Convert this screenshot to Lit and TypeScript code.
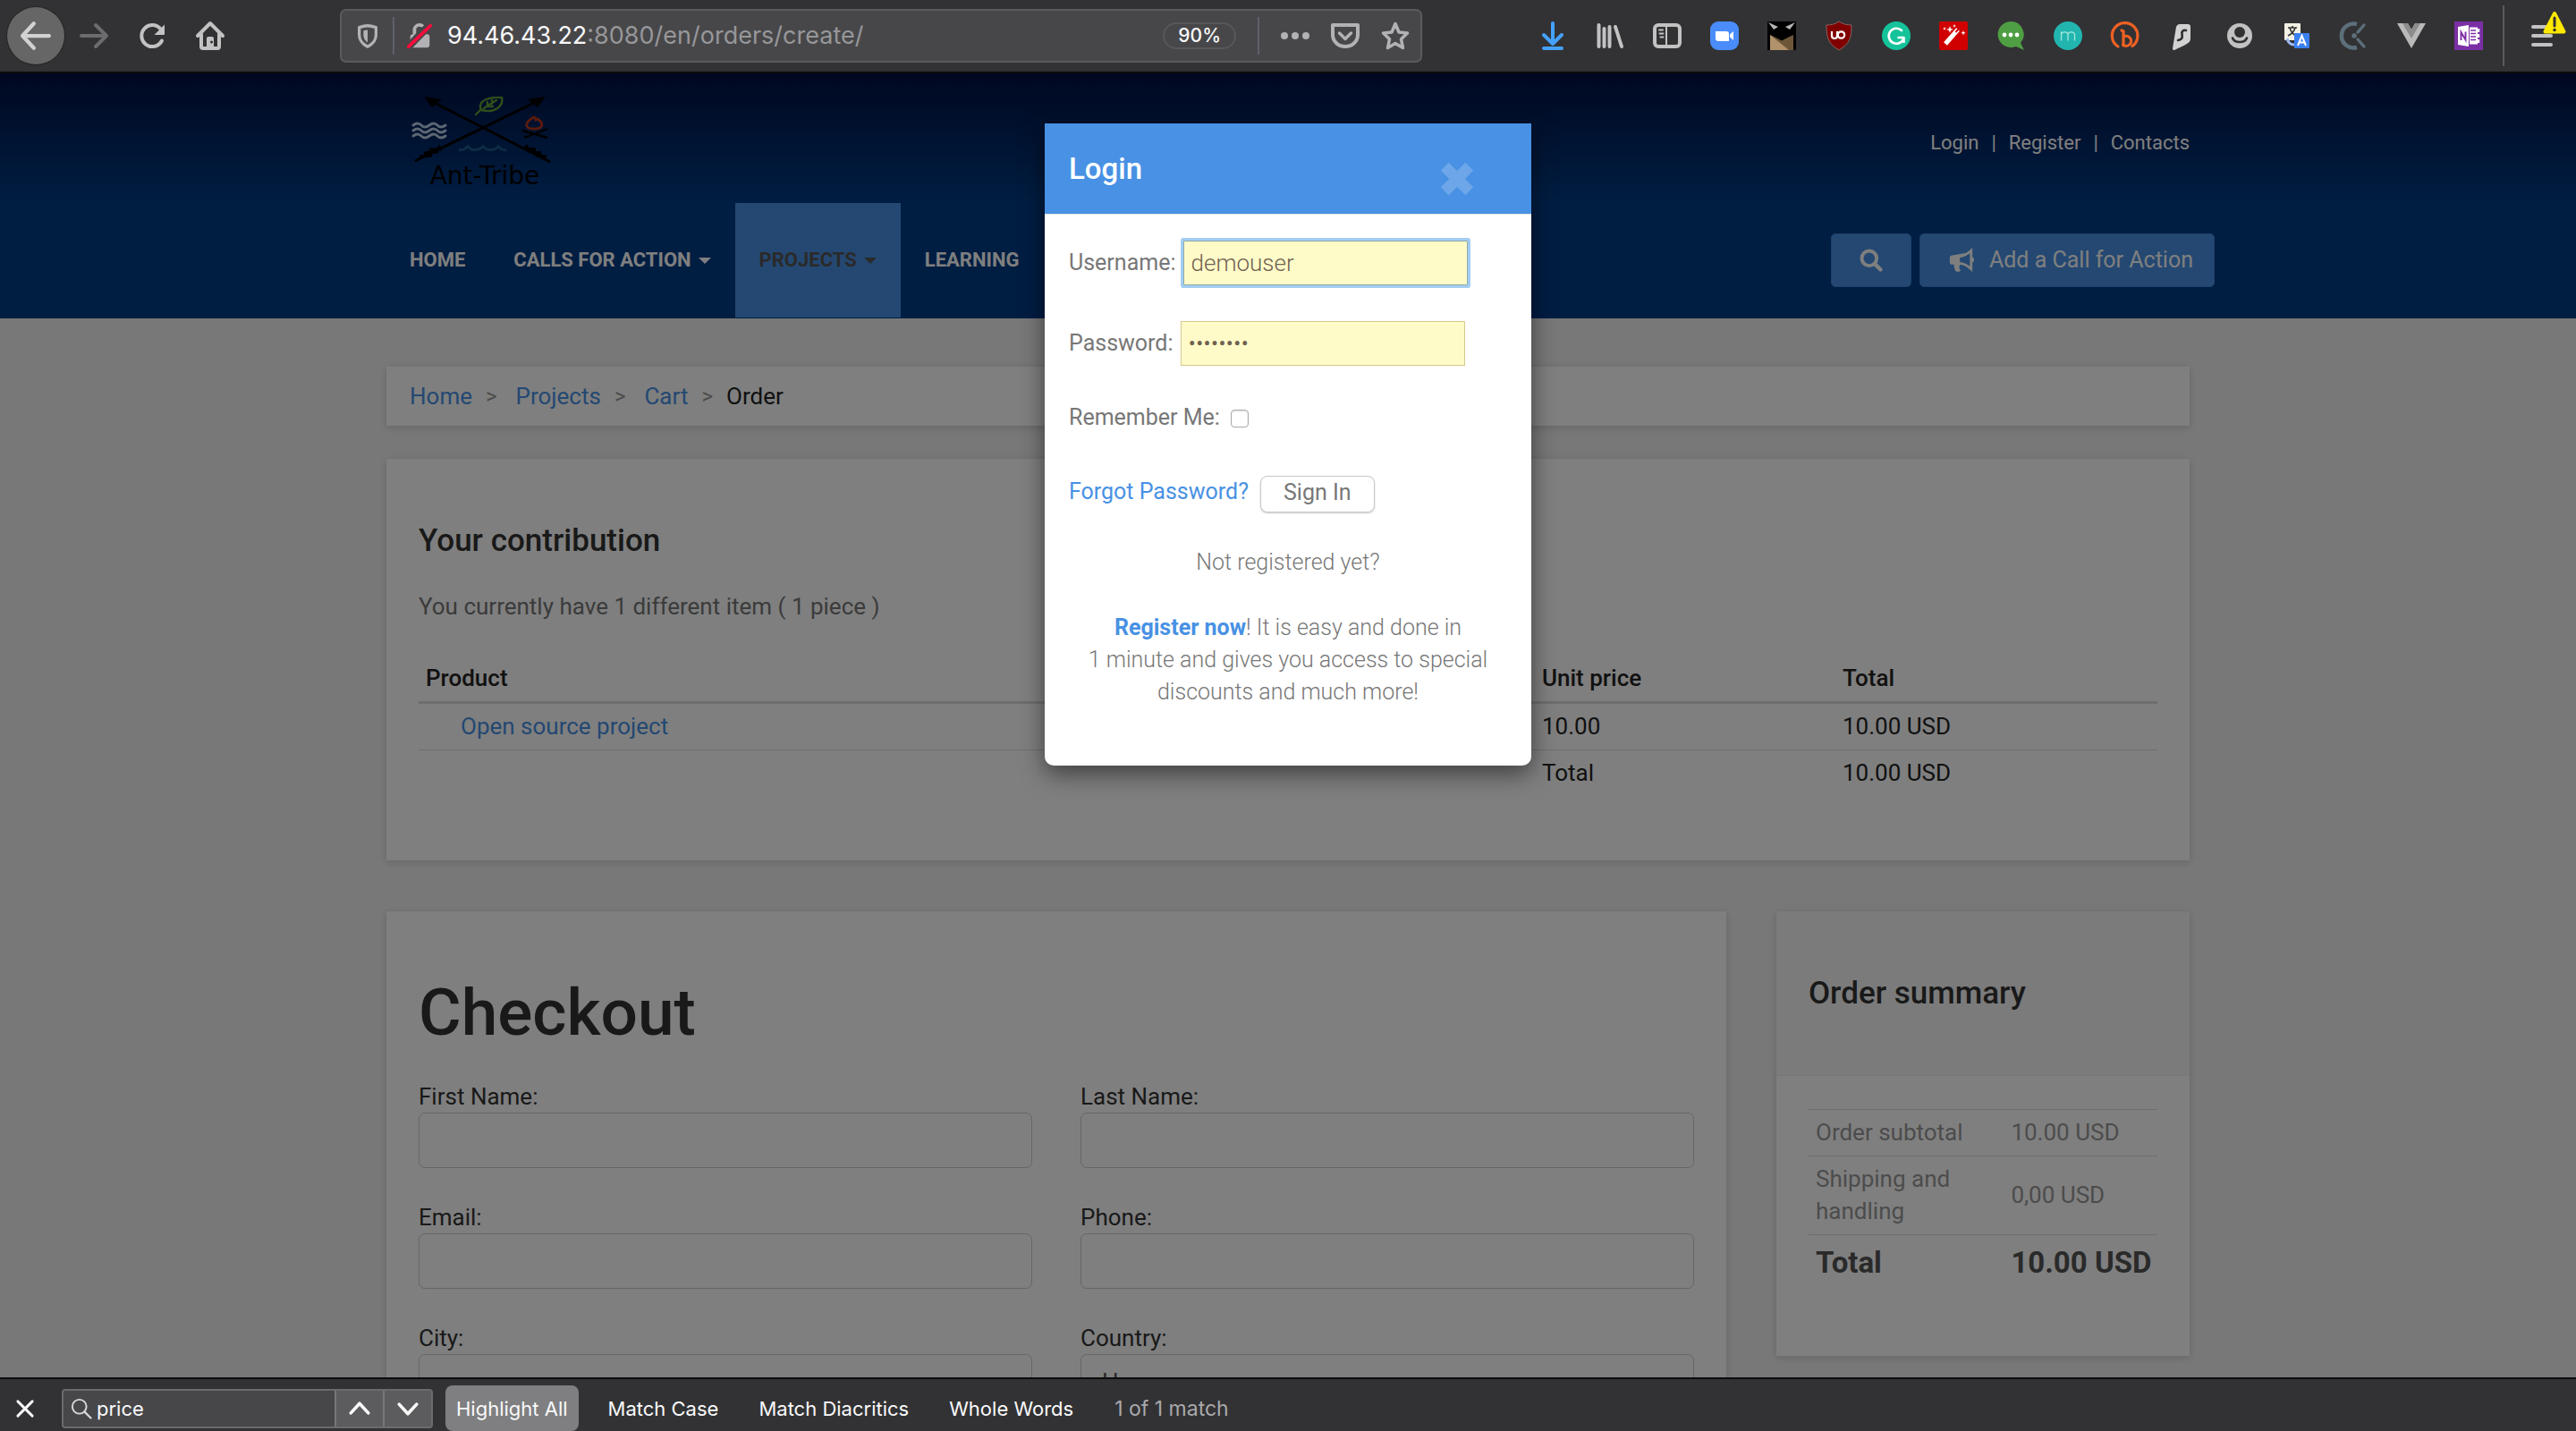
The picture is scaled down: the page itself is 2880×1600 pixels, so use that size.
import { LitElement, html, svg, css, TemplateResult } from "lit";
import { customElement } from "lit/decorators.js";
import { classMap } from "lit/directives/class-map.js";

const icon = (body: TemplateResult, size = 32) =>
  html`<svg class="icon" width=${size} height=${size} viewBox="0 0 32 32" aria-hidden="true">${body}</svg>`;

/* ---------- browser chrome icons, all on a 32 unit grid ---------- */
const back = svg`<path d="M30 16H2M14 3L2 16l12 13" fill="none" stroke="#d2d2d3" stroke-width="4" stroke-linecap="round" stroke-linejoin="round"/>`;
const forward = svg`<path d="M2 16h28M18 4l12 12-12 12" fill="none" stroke="#6c6c6e" stroke-width="4" stroke-linecap="round" stroke-linejoin="round"/>`;
const reload = svg`<path d="M27 21.500A12 12 0 1 1 26 9" fill="none" stroke="#c2c2c3" stroke-width="4" stroke-linecap="round"/><path d="M30 3.500v10.500a1 1 0 0 1-1 1H18.500z" fill="#c2c2c3"/>`;
const home = svg`<path d="M2 16L16 2l14 14M6 14v14q0 2 2 2h16q2 0 2-2V14" fill="none" stroke="#c2c2c3" stroke-width="4" stroke-linecap="round" stroke-linejoin="round"/><path d="M12 29V19q0-2 2-2h4q2 0 2 2v10z" fill="#c2c2c3"/><circle cx="17.500" cy="23" r="1.500" fill="#323234"/>`;
const shield = svg`<path d="M16 4c4 0 7 1 10 2v9c0 7-4 11-10 14C10 26 6 22 6 15V6c3-1 6-2 10-2z" fill="none" stroke="#b2b2b4" stroke-width="3.500" stroke-linejoin="round"/><path d="M16 9v15c-3-2-5-5-5-9v-5c2-.6 3-1 5-1z" fill="#b2b2b4"/>`;
const lock = svg`<path d="M10 14V9a6 6 0 0 1 12 0v5" fill="none" stroke="#b2b2b4" stroke-width="4"/><rect x="5" y="14" width="23" height="16" rx="3" fill="#b2b2b4"/><path d="M3 29L28 3" stroke="#464648" stroke-width="9" stroke-linecap="round"/><path d="M3 29L29 4" stroke="#ff0a3c" stroke-width="4" stroke-linecap="round"/>`;
const dots = svg`<circle cx="4" cy="16" r="4"/><circle cx="16" cy="16" r="4"/><circle cx="28" cy="16" r="4"/>`;
const pocket = svg`<path d="M2 4h28v11a14 13 0 0 1-28 0z" fill="none" stroke="#b2b2b4" stroke-width="4" stroke-linejoin="round"/><path d="M9.500 13l6.500 6.500 6.500-6.500" fill="none" stroke="#b2b2b4" stroke-width="3.500" stroke-linecap="round" stroke-linejoin="round"/>`;
const star = svg`<path d="M16 2.500l4 9.500 9.500 1-7 6.800 2 9.700-8.500-5-8.500 5 2-9.700-7-6.800 9.500-1z" fill="none" stroke="#b2b2b4" stroke-width="3.500" stroke-linejoin="round"/>`;

const extensions: { name: string; body: TemplateResult }[] = [
  { name: "Downloads", body: svg`<path d="M16 2v23M6 15l10 10 10-10M6 30h20" fill="none" stroke="#45a1ff" stroke-width="4" stroke-linecap="round" stroke-linejoin="round"/>` },
  { name: "Library", body: svg`<path d="M3.500 4v24M9.500 8v20M15.500 6v22M22 6l7 22" fill="none" stroke="#c2c2c3" stroke-width="4" stroke-linecap="round"/>` },
  { name: "Sidebars", body: svg`<rect x="2" y="4" width="28" height="24" rx="4" fill="none" stroke="#c2c2c3" stroke-width="4"/><path d="M15 4v24" stroke="#c2c2c3" stroke-width="2"/><path d="M7 9.500h4M7.500 13.500h4M8.500 17.500h3" stroke="#c2c2c3" stroke-width="2" stroke-linecap="round"/>` },
  { name: "Zoom", body: svg`<rect width="32" height="32" rx="9" fill="#4a8cfb"/><path d="M6 11h12q3 0 3 3v8H9q-3 0-3-3z" fill="#fff"/><path d="M22 14.500l4-3.500v10l-4-3.500z" fill="#fff"/>` },
  { name: "Tampermonkey", body: svg`<rect width="32" height="32" fill="#000"/><path d="M3 15l13 6 13-6v17H3z" fill="#6b5738"/><path d="M3 15l21 17H3z" fill="#b1926a"/><path d="M3 14l13 7.500L29 14V9H3z" fill="#000"/><path d="M1 1l11 5-5 3zM31 1L20 6l5 3z" fill="#b5b5b8"/>` },
  { name: "uBlock", body: svg`<path d="M16 0c4 3 9 4 14 4 0 14-2 21-14 28C4 25 2 18 2 4c5 0 10-1 14-4z" fill="#800000" stroke="#8b6060" stroke-width="1"/><path d="M8 11v5a3 3 0 0 0 6 0v-5" fill="none" stroke="#fff" stroke-width="2.200"/><circle cx="18.500" cy="15" r="3.700" fill="none" stroke="#fff" stroke-width="2.200"/>` },
  { name: "Grammarly", body: svg`<circle cx="16" cy="16" r="16" fill="#15c39a"/><path d="M22 10a8.500 8.500 0 1 0 2.500 8h-6M24.500 18v5" fill="none" stroke="#fff" stroke-width="2.600" stroke-linecap="round" stroke-linejoin="round"/>` },
  { name: "Colour picker", body: svg`<rect width="32" height="32" rx="2" fill="#d00000"/><path d="M7 25L21 9" stroke="#fff" stroke-width="5"/><path d="M18.500 12l3-3.400" stroke="#d00000" stroke-width="2"/><path d="M12 5l1 3 3 1-3 1-1 3-1-3-3-1 3-1zM27 10l.7 2 2 .7-2 .7-.7 2-.7-2-2-.7 2-.7zM17 3l.6 1.400 1.400.6-1.400.6-.6 1.400-.6-1.400L15 5l1.400-.6zM6 6l.6 1.400L8 8l-1.400.6L6 10l-.6-1.400L4 8l1.400-.6z" fill="#fff"/>` },
  { name: "Chat", body: svg`<path d="M16 0a15 14.500 0 1 0 6 28l9 4-4-8A14.500 14.500 0 0 0 16 0z" fill="#4f9e44"/><circle cx="9" cy="15" r="2.400" fill="#fff"/><circle cx="16" cy="15" r="2.400" fill="#fff"/><circle cx="23" cy="15" r="2.400" fill="#fff"/>` },
  { name: "Momentum", body: svg`<circle cx="16" cy="16" r="16" fill="#22b5b0"/><path d="M8.500 21.500v-10M8.500 15c0-4 7-4.500 7.500 0v6.500M16 15c0-4 7-4.500 7.500 0v6.500" fill="none" stroke="#9fe8dc" stroke-width="1.300"/>` },
  { name: "Bitly", body: svg`<path d="M8 28A14.300 14.300 0 1 1 24 27.500M12 10l2 1v16M13.500 26a5.500 5.500 0 1 0 1-9" fill="none" stroke="#ee6123" stroke-width="3.200" stroke-linecap="round"/>` },
  { name: "Stylus", body: svg`<path d="M9 6c1-2 2-3 4-3h9c2 0 3 1 3 3v12c0 4-1 5-4 7-5 3-8 4-14 7-1 0-2 0-2-2z" fill="#d2d2d2"/><path d="M20 10c-3-1-5 1-4.500 4s1 6-4.500 7" fill="none" stroke="#323234" stroke-width="2.600" stroke-linecap="round"/>` },
  { name: "Account", body: svg`<circle cx="16" cy="16" r="14" fill="#c2c2c3"/><circle cx="16" cy="12" r="6" fill="#323234"/><path d="M8 18.500c2 6 14 6 16 0" fill="none" stroke="#323234" stroke-width="2.600" stroke-linecap="round"/>` },
  { name: "Translate", body: svg`<rect x="2" y="2" width="18" height="19" rx="1" fill="#f2f0e4"/><path d="M6 7h10M11 5v2M8 7c1 4 3 7 7 9M14 7c-1 4-4 7-8 9" fill="none" stroke="#333" stroke-width="1.600"/><rect x="13" y="13" width="17" height="17" rx="1" fill="#3a7ff0"/><path d="M17 27l4.500-11L26 27M18.500 23.500h6" fill="none" stroke="#fff" stroke-width="2"/><path d="M5 19c1 4 3 7 8 7" fill="none" stroke="#9dbdf5" stroke-width="3"/>` },
  { name: "Clockify", body: svg`<path d="M19 3a13.500 13.500 0 1 0 0 26" fill="none" stroke="#5c6f7a" stroke-width="4.600"/><path d="M20 12l7-8M20 20l7 8" stroke="#5c6f7a" stroke-width="3.400" stroke-linecap="round"/><circle cx="16" cy="16" r="2.800" fill="#5c6f7a"/>` },
  { name: "Vue devtools", body: svg`<path d="M0 2h12l4 7 4-7h12L16 30z" fill="#b9b9b9"/><path d="M6 2h6l4 7 4-7h6L16 19z" fill="#8c8c8c"/>` },
  { name: "OneNote", body: svg`<rect width="32" height="32" fill="#7b2fa5"/><path d="M4 6l12-2v24L4 26z" fill="#fff"/><path d="M7.500 21v-9l5 8.500V11.500" fill="none" stroke="#7b2fa5" stroke-width="1.900"/><path d="M17 6.500h9v19h-9z" fill="#fff"/><path d="M27 8v4M27 14v4M27 20v4" stroke="#fff" stroke-width="2.400"/><path d="M18 10h6M18 13.500h6M18 17h6M18 20.500h6" stroke="#7b2fa5" stroke-width="1.400"/>` },
];

const menuIcon = html`<svg class="icon" width="48" height="52" viewBox="0 0 48 52" aria-hidden="true">
  <path d="M14 16h20M14 26h20M14 36h20" stroke="#c2c2c3" stroke-width="4" stroke-linecap="round"/>
  <path d="M38 1l10.500 20.500h-21z" fill="#ffe900" stroke="#ffe900" stroke-width="4" stroke-linejoin="round"/>
  <path d="M38 6v9" stroke="#323234" stroke-width="3" stroke-linecap="round"/><circle cx="38" cy="19.500" r="1.800" fill="#323234"/>
</svg>`;

/* ---------- site artwork ---------- */
const logo = html`<svg class="logo" width="168" height="104" viewBox="0 0 168 104" role="img" aria-label="Ant-Tribe">
  <g stroke="#000" stroke-width="3" fill="#000">
    <path d="M22 4L157 73M145 4L6 72" fill="none"/>
    <path d="M16 0l20 3-11 9z" stroke="none"/><path d="M152 0l-20 3 11 9z" stroke="none"/>
    <path d="M11 67l14-1M16 63l16-1M22 59l14 0M15 68l6-7M23 65l5-7M30 61l4-6" stroke-width="3"/>
    <path d="M153 67l-12-1M147 63l-13-1M141 59l-13-1M148 69l-4-8M141 66l-4-9M134 62l-4-8" stroke-width="3"/>
  </g>
  <g fill="none" stroke="#b9cfe6" stroke-width="3" stroke-linecap="round">
    <path d="M4 32q5-4 9 0t9 0 9 0 9 0M4 38q5-4 9 0t9 0 9 0 9 0M4 44q5-4 9 0t9 0 9 0 9 0"/>
  </g>
  <path d="M55 59.500q6 1 10-4 4 5 8 4 6 0 9-4 4 5 9 4 5 0 8-4 4 5 9 4" fill="none" stroke="#1c5d8a" stroke-width="2.600"/>
  <path d="M74 20l6-6M80 15C75 4 90 0 103 1c2 10-8 18-23 14zM83 13l14-9M87 6v5h6M92 4v4" fill="none" stroke="#5d9c34" stroke-width="2.400" stroke-linecap="round"/>
  <path d="M139 23c-11 6-11 13 0 13s11-6 4-11l-2 1c0-1 0-2-2-3z" fill="none" stroke="#b8371a" stroke-width="2.800"/>
  <path d="M126 38l28 8M154 36l-26 10" stroke="#000" stroke-width="2.400"/>
  <text x="84" y="98" text-anchor="middle" class="logo-text">Ant-Tribe</text>
</svg>`;

const searchIcon = svg`<circle cx="13.500" cy="13.500" r="9.500" fill="none" stroke="currentColor" stroke-width="4.500"/><path d="M21 21l7 7" stroke="currentColor" stroke-width="5" stroke-linecap="round"/>`;
const megaphone = svg`<path d="M5 10h9C20 10 25 6 28 2v4M5 10a3 3 0 0 0-3 3v5a3 3 0 0 0 3 3h2c0 4 1 6 2 8 2 1 5 1 6-1-2-2-2-4-1-7V10z" fill="currentColor"/><path d="M13 11.500c6 0 10-3 14.500-7v22c-4-4-9-7-14.500-7" fill="none" stroke="currentColor" stroke-width="3"/><path d="M28 12c4 1 4 6 0 7z" fill="currentColor"/>`;
const times = svg`<path d="M6 6l20 20M26 6L6 26" stroke="currentColor" stroke-width="9"/>`;

/* ================= browser toolbar ================= */
@customElement("browser-toolbar")
class BrowserToolbar extends LitElement {
  static styles = css`
    :host { display: flex; align-items: center; height: 80px; padding: 0 6px 0 8px; box-sizing: content-box;
      background: #323234; border-bottom: 2px solid #0c0c0d; font-family: Inter, "Liberation Sans", sans-serif; }
    button { border: 0; background: none; padding: 0; margin: 0; color: inherit; font: inherit; width: 64px; height: 64px; display: grid; place-items: center; flex: none; }
    .icon { display: block; overflow: visible; }
    .nav { display: flex; gap: 1px; }
    .back { background: #666667; border-radius: 50%; box-shadow: 0 0 0 1px #252526; }
    .address { flex: 1; height: 56px; margin: 0 114px 0 113px; border: 2px solid #5b5b5d; border-radius: 7px; background: #474749;
      display: flex; align-items: center; fill: #b2b2b4; }
    .address button { width: auto; height: 48px; }
    .ident { display: flex; align-items: center; padding: 0 16px 0 14px; gap: 13px; }
    .rule { width: 2px; height: 42px; background: #5e616b; }
    .url { flex: 1; font-size: 27px; line-height: 40px; color: #97979a; white-space: nowrap; outline: 0; }
    .host { color: #f9f9fa; }
    .address .zoom { height: 30px; border: 2px solid #58585a; border-radius: 16px; padding: 0 15px; font-size: 21px; box-sizing: border-box; color: #f9f9fa; line-height: 26px; font-weight: 500; }
    .actions { display: flex; align-items: center; gap: 24px; padding: 0 12px 0 24px; }
    .zoom { margin-right: 24px; }
    .ext { display: flex; margin-right: 6px; }
    .divider { width: 2px; height: 68px; background: #5a5a5c; margin-right: 10px; }
  `;

  render() {
    return html`
      <nav class="nav" aria-label="History">
        <button class="back" aria-label="Back">${icon(back, 34)}</button>
        <button aria-label="Forward">${icon(forward)}</button>
        <button aria-label="Reload">${icon(reload)}</button>
        <button aria-label="Home page">${icon(home)}</button>
      </nav>
      <div class="address">
        <div class="ident">
          <button aria-label="Tracking protection">${icon(shield, 30)}</button>
          <span class="rule"></span>
          <button aria-label="Connection is not secure">${icon(lock, 30)}</button>
        </div>
        <div class="url" role="textbox" tabindex="0" aria-label="Address"><span class="host">94.46.43.22</span>:8080/en/orders/create/</div>
        <button class="zoom" aria-label="Reset zoom level">90%</button>
        <span class="rule"></span>
        <div class="actions">
          <button aria-label="Page actions">${icon(dots)}</button>
          <button aria-label="Save to Pocket">${icon(pocket)}</button>
          <button aria-label="Bookmark">${icon(star)}</button>
        </div>
      </div>
      <div class="ext">${extensions.map((e) => html`<button aria-label=${e.name}>${icon(e.body)}</button>`)}</div>
      <span class="divider"></span>
      <button aria-label="Open menu">${menuIcon}</button>
    `;
  }
}

/* ================= find bar ================= */
@customElement("find-bar")
class FindBar extends LitElement {
  static styles = css`
    :host { display: flex; align-items: center; height: 51px; padding-top: 7px; box-sizing: content-box; border-top: 2px solid #0c0c0d; background: #323234;
      font-family: Inter, "Liberation Sans", sans-serif; font-size: 22px; line-height: 28px; color: #f9f9fa; }
    button { border: 0; background: none; margin: 0; color: inherit; font: inherit; padding: 0; display: grid; place-items: center; white-space: nowrap; }
    .icon { display: block; }
    .chevron { fill: none; stroke: #f9f9fa; stroke-width: 4.5; stroke-linecap: round; stroke-linejoin: round; }
    .close { width: 56px; height: 50px; margin-right: 13px; }
    .field { display: flex; align-items: center; height: 40px; width: 411px; border: 2px solid #6b6b6d; border-radius: 4px; background: #474749; }
    .glass { margin: 0 5px 0 8px; }
    .field input { flex: 1; min-width: 0; border: 0; outline: 0; background: none; color: inherit; font: inherit; padding: 0; }
    .step { width: 54px; height: 40px; background: #5c5c5e; border-left: 2px solid #77777a; box-sizing: border-box; }
    .toggles { display: flex; gap: 21px; margin-left: 14px; }
    .toggle { height: 51px; padding: 0 12px; border-radius: 8px; }
    .on { background: #7f7f81; }
    .status { color: #a9a9ab; margin-left: 34px; font-size: 23px; }
  `;

  private toggles = [
    { label: "Highlight All", on: true },
    { label: "Match Case", on: false },
    { label: "Match Diacritics", on: false },
    { label: "Whole Words", on: false },
  ];

  render() {
    return html`
      <button class="close" aria-label="Close find bar">${icon(svg`<path d="M6 6l20 20M26 6L6 26" stroke="#f9f9fa" stroke-width="3.500" stroke-linecap="round"/>`, 26)}</button>
      <div class="field">
        <span class="glass">${icon(svg`<circle cx="13" cy="13" r="10.500" fill="none" stroke="#d8d8da" stroke-width="2.600"/><path d="M20.500 20.500L30 30" stroke="#d8d8da" stroke-width="3" stroke-linecap="round"/>`, 24)}</span>
        <input type="text" aria-label="Find in page" .value=${"price"} />
        <button class="step" aria-label="Previous">${icon(svg`<path class="chevron" d="M4 22L16 9l12 13"/>`, 26)}</button>
        <button class="step" aria-label="Next">${icon(svg`<path class="chevron" d="M4 10l12 13L28 10"/>`, 26)}</button>
      </div>
      <div class="toggles">
        ${this.toggles.map((t) => html`<button class=${classMap({ toggle: true, on: t.on })} aria-pressed=${t.on ? "true" : "false"}>${t.label}</button>`)}
      </div>
      <span class="status">1 of 1 match</span>
    `;
  }
}

/* ================= site header ================= */
@customElement("site-header")
class SiteHeader extends LitElement {
  static styles = css`
    :host { display: block; background: linear-gradient(#001040, #003b84 143px); color: #fff; padding-bottom: 1px; }
    .wrap { max-width: 2072px; margin: 0 auto; }
    a { color: inherit; text-decoration: none; }
    .top { display: flex; justify-content: space-between; align-items: center; height: 145px; box-sizing: border-box; padding: 10px 28px 0 54px; }
    .logo { display: block; }
    .logo-text { font: 28px "DejaVu Sans", sans-serif; fill: #000; }
    .links { display: flex; gap: 14px; font-size: 22px; line-height: 36px; }
    .bar { display: flex; justify-content: space-between; align-items: center; padding-left: 27px; height: 128px; }
    .menu { display: flex; align-self: stretch; list-style: none; margin: 0; padding: 0; }
    .menu a { display: flex; align-items: center; gap: 8px; height: 100%; box-sizing: border-box; padding: 0 27px; font-size: 22px; font-weight: 700; line-height: 36px; }
    .menu .active { background: #4891e4; color: #555; }
    .caret { border: 7px solid transparent; border-top-color: currentColor; border-bottom: 0; }
    .tools { display: flex; gap: 9px; }
    button { font: 25px/36px Roboto, sans-serif; color: #fff; background: #4891e4; border: 1px solid #3783d8; border-radius: 5px; height: 60px; display: flex; align-items: center; gap: 16px; margin: 0; padding: 0 23px 0 31px; }
    .search { padding: 0 30px; }
    .icon { display: block; }
  `;

  private items = [
    { label: "HOME" },
    { label: "CALLS FOR ACTION", caret: true },
    { label: "PROJECTS", caret: true, active: true },
    { label: "LEARNING" },
  ] as { label: string; caret?: boolean; active?: boolean }[];

  render() {
    return html`
      <div class="wrap">
        <div class="top">
          <a href="#">${logo}</a>
          <div class="links"><a href="#">Login</a><span>|</span><a href="#">Register</a><span>|</span><a href="#">Contacts</a></div>
        </div>
        <div class="bar">
          <ul class="menu">
            ${this.items.map((i) => html`<li><a href="#" class=${classMap({ active: !!i.active })}>${i.label}${i.caret ? html`<span class="caret"></span>` : ""}</a></li>`)}
          </ul>
          <div class="tools">
            <button class="search" aria-label="Search">${icon(searchIcon, 28)}</button>
            <button>${icon(megaphone, 30)}Add a Call for Action</button>
          </div>
        </div>
      </div>
    `;
  }
}

/* ================= order page ================= */
@customElement("order-page")
class OrderPage extends LitElement {
  static styles = css`
    :host { display: block; max-width: 2016px; margin: 0 auto; padding-top: 54px; color: #333; font-size: 26px; line-height: 36px; }
    a { color: #4891e4; text-decoration: none; }
    .card { background: #fff; box-shadow: 0 2px 9px rgba(0, 0, 0, 0.16); }
    .crumbs { display: flex; align-items: center; height: 66px; box-sizing: border-box; margin: 0 0 37px; padding: 0 26px; list-style: none; color: #222; }
    .crumbs li { display: flex; align-items: center; }
    .crumbs li + li::before { content: ">"; color: #999; font-size: 24px; padding: 0 21px 0 15px; }
    .crumbs li:last-child::before { padding-right: 15px; }
    h1, h2 { margin: 0; font-weight: 500; color: #333; }
    h1 { font-size: 73px; line-height: 80px; margin-bottom: 36px; }
    h2 { font-size: 35px; line-height: 44px; }
    .contribution { padding: 70px 36px 72px; margin-bottom: 57px; }
    .contribution p { margin: 33px 0 37px; color: #777; }
    table { width: 100%; table-layout: fixed; border-collapse: separate; border-spacing: 0; color: #222; }
    th, td { box-sizing: border-box; padding: 7px 8px 8px; text-align: left; font-weight: 400; }
    thead th { font-weight: 500; border-bottom: 3px solid #ddd; }
    .cart tbody tr:first-child td { border-bottom: 1px solid #ddd; }
    .product { width: 692px; }
    .kind { width: 556px; }
    .price { width: 336px; }
    .cart .indent { padding-left: 47px; }
    .columns { display: grid; grid-template-columns: 1498fr 462fr; gap: 56px; align-items: start; }
    .checkout { padding: 73px 36px; }
    .fields { display: grid; grid-template-columns: 1fr 1fr; gap: 37px 54px; }
    label { display: block; color: #333; }
    .field input, .field select { display: block; width: 100%; height: 62px; box-sizing: border-box; margin: 0; padding: 0 23px; border: 1px solid #ccc; border-radius: 7px; background: #fff; font: 26px/36px Roboto, sans-serif; color: #555; appearance: none; }
    .summary-head { background: #f7f7f7; border-bottom: 1px solid #eee; padding: 70px 36px 69px; }
    .summary-body { padding: 37px 36px 74px; }
    .summary td, .summary th { border-top: 1px solid #ddd; color: #999; }
    .summary .label { width: 56%; }
    .summary .total th, .summary .total td { padding-top: 9px; font-size: 33px; line-height: 44px; font-weight: 700; color: #555; white-space: nowrap; }
  `;

  private fields = [
    { id: "first", label: "First Name:" },
    { id: "last", label: "Last Name:" },
    { id: "email", label: "Email:" },
    { id: "phone", label: "Phone:" },
    { id: "city", label: "City:" },
    { id: "country", label: "Country:", options: ["Hungary"] },
  ] as { id: string; label: string; options?: string[] }[];

  render() {
    return html`
      <ol class="card crumbs">
        <li><a href="#">Home</a></li><li><a href="#">Projects</a></li><li><a href="#">Cart</a></li><li>Order</li>
      </ol>
      <section class="card contribution">
        <h2>Your contribution</h2>
        <p>You currently have 1 different item ( 1 piece )</p>
        <table class="cart">
          <thead><tr><th class="product">Product</th><th class="kind">Type</th><th class="price">Unit price</th><th>Total</th></tr></thead>
          <tbody>
            <tr><td class="indent"><a href="#">Open source project</a></td><td></td><td>10.00</td><td>10.00 USD</td></tr>
            <tr><td></td><td></td><td>Total</td><td>10.00 USD</td></tr>
          </tbody>
        </table>
      </section>
      <div class="columns">
        <form class="card checkout">
          <h1>Checkout</h1>
          <div class="fields">
            ${this.fields.map((f) => html`<div class="field"><label for=${f.id}>${f.label}</label>${f.options
              ? html`<select id=${f.id}>${f.options.map((o) => html`<option>${o}</option>`)}</select>`
              : html`<input id=${f.id} type="text" />`}</div>`)}
          </div>
        </form>
        <aside class="card summary">
          <div class="summary-head"><h2>Order summary</h2></div>
          <div class="summary-body">
            <table>
              <tr><th class="label">Order subtotal</th><td>10.00 USD</td></tr>
              <tr><th>Shipping and handling</th><td>0,00 USD</td></tr>
              <tr class="total"><th>Total</th><td>10.00 USD</td></tr>
            </table>
          </div>
        </aside>
      </div>
    `;
  }
}

/* ================= login dialog ================= */
@customElement("login-dialog")
class LoginDialog extends LitElement {
  static styles = css`
    :host { position: absolute; inset: 0; background: rgba(0, 0, 0, 0.5); display: flex; justify-content: center; align-items: flex-start; padding-top: 56px; font-size: 25px; line-height: 36px; color: #777; }
    .dialog { width: 544px; background: #fff; border-radius: 0 0 10px 10px; box-shadow: 0 9px 27px rgba(0, 0, 0, 0.5); }
    header { display: flex; justify-content: space-between; align-items: center; height: 102px; box-sizing: border-box; padding: 0 61px 0 27px; background: #4891e4; border-bottom: 1px solid #e5e5e5; }
    h4 { margin: 0; font-size: 33px; line-height: 44px; font-weight: 500; color: #fff; }
    .close { border: 0; background: none; color: #6da7e9; margin: 22px 0 0; padding: 0; }
    .icon { display: block; }
    form { display: flex; flex-direction: column; gap: 40px; padding: 29px 27px 0; }
    .row { display: flex; align-items: center; gap: 9px; height: 50px; }
    .short { height: 36px; }
    .send { margin-top: 7px; }
    .text { width: 318px; height: 50px; box-sizing: border-box; margin: 0; padding: 0 7px; border: 1px solid #d6c98c; background: #fffbc8; font: 300 26px/36px Roboto, sans-serif; color: #6f6252; outline: 0; }
    .focused { border-color: #8fa9a8; box-shadow: 0 0 0 3px #a3cdf2; border-radius: 1px; }
    .check { appearance: none; width: 20px; height: 20px; margin: 2px 0 0 3px; border: 1px solid #aaa; border-radius: 4px; background: #fff; box-shadow: inset 0 1px 2px #ddd; }
    a { color: #4891e4; text-decoration: none; }
    .submit { height: 41px; flex: none; margin: 4px 0 0 4px; padding: 0 25px 4px; border: 1px solid #c9c9c9; border-radius: 8px; background: #fff; box-shadow: 0 1px 2px #ccc; font: 25px/36px Roboto, sans-serif; color: #777; }
    .note { padding: 43px 28px 64px; text-align: center; font-weight: 300; }
    .note p { margin: 0 0 37px; }
    .note p:last-child { margin: 0; }
    .note a { font-weight: 700; }
  `;

  render() {
    return html`
      <div class="dialog" role="dialog" aria-label="Login">
        <header><h4>Login</h4><button class="close" aria-label="Close">${icon(times, 44)}</button></header>
        <form>
          <div class="row"><label for="user">Username:</label><input class="text focused" id="user" type="text" .value=${"demouser"} /></div>
          <div class="row"><label for="pass">Password:</label><input class="text" id="pass" type="password" .value=${"demouser"} /></div>
          <div class="row short"><label for="remember">Remember Me:</label><input class="check" id="remember" type="checkbox" /></div>
          <div class="row short send"><a href="#">Forgot Password?</a><button class="submit" type="button">Sign In</button></div>
        </form>
        <div class="note">
          <p>Not registered yet?</p>
          <p><a href="#">Register now</a>! It is easy and done in<br />1&nbsp;minute and gives you access to special<br />discounts and much more!</p>
        </div>
      </div>
    `;
  }
}

@customElement("app-root")
class AppRoot extends LitElement {
  static styles = css`
    :host { display: flex; flex-direction: column; height: 100vh; font-family: Roboto, "Liberation Sans", sans-serif; }
    .page { flex: 1; min-height: 0; overflow: hidden; position: relative; background: #f1f1f1; }
    browser-toolbar, find-bar { flex: none; }
  `;

  render() {
    return html`
      <browser-toolbar></browser-toolbar>
      <main class="page">
        <site-header></site-header>
        <order-page></order-page>
        <login-dialog></login-dialog>
      </main>
      <find-bar></find-bar>
    `;
  }
}
